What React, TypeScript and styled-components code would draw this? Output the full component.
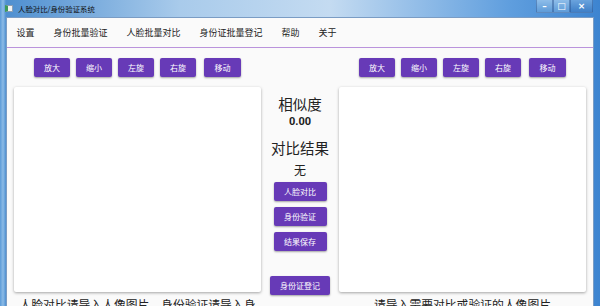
import React from "react"
import styled, { createGlobalStyle } from "styled-components"

const GlobalStyle = createGlobalStyle`
  html, body {
    margin: 0;
    padding: 0;
    background: #fff;
  }
  body {
    font-family: "Noto Sans CJK SC", "Noto Sans", sans-serif;
  }
`

const Window = styled.div`
  width: 600px;
  height: 306px;
  display: flex;
  flex-direction: column;
  overflow: hidden;
  background: linear-gradient(90deg, #5b9bd8 0px, #8cbbe6 3px, #4e8fd0 6px, #a9cbeb 30%, #c4dbf1 55%, #5f9ede 85%, #3d84d0 100%);
`

const TitleBar = styled.div`
  height: 17px;
  flex: none;
  display: flex;
  align-items: center;
  padding-left: 5px;
  position: relative;
`

const AppIcon = styled.div`
  width: 8px;
  height: 7px;
  background: #f2f2f2;
  border: 1px solid #8a9fb5;
  border-left: 3px solid #3c9a5a;
  box-sizing: border-box;
  margin-right: 5px;
`

const Title = styled.span`
  font-size: 7.4px;
  color: #111;
  line-height: 1;
`

const Caption = styled.div`
  position: absolute;
  right: 7px;
  top: 0;
  display: flex;
`

const CaptionButton = styled.div<{ $wide?: boolean; $close?: boolean }>`
  width: ${p => (p.$wide ? 23 : 17)}px;
  height: 13px;
  display: flex;
  align-items: center;
  justify-content: center;
  border: 1px solid rgba(40, 80, 140, 0.45);
  border-top: none;
  box-sizing: border-box;
  background: ${p => (p.$close ? "linear-gradient(#6aa3dd, #3f7fc7)" : "linear-gradient(#8ebde9, #5e9bd8)")};
  color: #fff;
  font-size: 9px;
  font-family: "DejaVu Sans", sans-serif;
  font-weight: bold;
`

const Client = styled.div`
  flex: 1;
  margin: 0 6px 0 6px;
  background: #fafafa;
  display: flex;
  flex-direction: column;
  min-height: 0;
  border: 1px solid #7a9cc4;
  border-bottom: none;
`

const MenuBar = styled.nav`
  height: 29px;
  flex: none;
  display: flex;
  align-items: center;
  padding-left: 0;
  border-bottom: 1.5px solid #ba93dc;
  background: #fafafa;
`

const MenuItem = styled.span`
  font-size: 9px;
  color: #222;
  padding: 0 9.5px;
`

const Content = styled.div`
  display: grid;
  grid-template-columns: 247px 78px 247px;
  padding: 10px 0 0 7px;
`

const Side = styled.div`
  display: flex;
  flex-direction: column;
  align-items: center;
`

const ToolRow = styled.div`
  height: 19px;
  display: flex;
  gap: 6px;
  margin-bottom: 10px;
`

const Button = styled.button<{ $w?: number }>`
  width: ${p => p.$w ?? 36}px;
  height: 19px;
  padding: 0;
  border: none;
  border-radius: 2px;
  background: #673ab7;
  color: #fff;
  font-family: inherit;
  font-size: 8px;
  box-shadow: 0 1px 2px rgba(0, 0, 0, 0.35);
`

const Panel = styled.div`
  width: 247px;
  height: 205px;
  background: #fff;
  border-radius: 2px;
  box-shadow: 0 1px 3px rgba(0, 0, 0, 0.35);
`

const Hint = styled.p`
  margin: 4px 0 0;
  width: 247px;
  text-align: center;
  font-size: 11.8px;
  line-height: 16px;
  color: #222;
`

const Center = styled.div`
  display: flex;
  flex-direction: column;
  align-items: center;
  padding-top: 36px;
`

const BigLabel = styled.div`
  font-size: 14.5px;
  line-height: 20px;
  color: #222;
`

const Value = styled.div<{ $bold?: boolean }>`
  font-size: ${p => (p.$bold ? 11 : 12)}px;
  font-weight: ${p => (p.$bold ? 700 : 400)};
  font-family: ${p => (p.$bold ? '"Roboto", "Noto Sans CJK SC", sans-serif' : "inherit")};
  line-height: 16px;
  color: #222;
`

const Stack = styled.div`
  display: flex;
  flex-direction: column;
  align-items: center;
  gap: 6px;
`

const tools = ["放大", "缩小", "左旋", "右旋", "移动"]
const menus = ["设置", "身份批量验证", "人脸批量对比", "身份证批量登记", "帮助", "关于"]

const Tools = () => (
  <ToolRow>
    {tools.map(t => (
      <Button key={t} $w={t === "移动" ? 37 : 36} style={t === "移动" ? { marginLeft: 2 } : undefined}>
        {t}
      </Button>
    ))}
  </ToolRow>
)

export default function App() {
  return (
    <>
      <GlobalStyle />
      <Window>
        <TitleBar>
          <AppIcon />
          <Title>人脸对比/身份验证系统</Title>
          <Caption>
            <CaptionButton>–</CaptionButton>
            <CaptionButton>□</CaptionButton>
            <CaptionButton $wide $close>×</CaptionButton>
          </Caption>
        </TitleBar>
        <Client>
          <MenuBar>
            {menus.map(m => (
              <MenuItem key={m}>{m}</MenuItem>
            ))}
          </MenuBar>
          <Content>
            <Side>
              <Tools />
              <Panel />
              <Hint>人脸对比请导入人像图片，身份验证请导入身份证照片</Hint>
            </Side>
            <Center>
              <BigLabel>相似度</BigLabel>
              <Value $bold>0.00</Value>
              <BigLabel style={{ marginTop: 8 }}>对比结果</BigLabel>
              <Value style={{ marginTop: 4 }}>无</Value>
              <Stack style={{ marginTop: 4 }}>
                <Button $w={53}>人脸对比</Button>
                <Button $w={53}>身份验证</Button>
                <Button $w={53}>结果保存</Button>
              </Stack>
              <Button $w={60} style={{ marginTop: 25 }}>身份证登记</Button>
            </Center>
            <Side>
              <Tools />
              <Panel />
              <Hint>请导入需要对比或验证的人像图片</Hint>
            </Side>
          </Content>
        </Client>
      </Window>
    </>
  )
}
